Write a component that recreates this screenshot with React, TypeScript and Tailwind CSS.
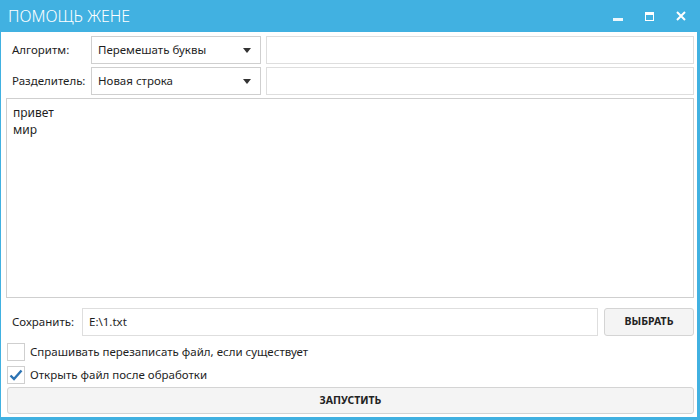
import React, { useState } from 'react';

const font = { fontFamily: '"Noto Sans", "Open Sans", sans-serif' };

const Combo: React.FC<{ value: string }> = ({ value }) => (
  <div className="flex items-center justify-between w-[170px] h-[28px] border border-[#cfcfcf] bg-white pl-[6px] pr-[9px] text-[#1e1e1e]">
    <span>{value}</span>
    <svg width="8" height="5" viewBox="0 0 8 5">
      <path d="M0 0 L8 0 L4 5 Z" fill="#333" />
    </svg>
  </div>
);

const Check: React.FC<{ checked: boolean; label: string; onToggle: () => void }> = ({ checked, label, onToggle }) => (
  <div className="flex items-center h-[23px] cursor-default" onClick={onToggle}>
    <div className="ml-[1px] w-[18px] h-[18px] border border-[#cfcfcf] bg-white flex items-center justify-center">
      {checked && (
        <svg width="14" height="12" viewBox="0 0 14 12">
          <path d="M1.5 6.5 L5 10 L12.5 1.5" stroke="#2c73b3" strokeWidth="2.4" fill="none" />
        </svg>
      )}
    </div>
    <span className="ml-[5px]">{label}</span>
  </div>
);

export default function App() {
  const [ask, setAsk] = useState(false);
  const [open, setOpen] = useState(true);

  return (
    <div style={font} className="w-[700px] h-[420px] bg-[#41b1e1] flex flex-col overflow-hidden">
      {/* Заголовок окна */}
      <div className="h-[32px] flex items-center justify-between pl-[8px] pr-[14px]">
        <span className="text-white text-[16px] font-light">ПОМОЩЬ ЖЕНЕ</span>
        <div className="flex items-center gap-[22px]">
          <div className="w-[10px] h-[10px] flex items-end">
            <div className="w-[10px] h-[3px] bg-white/90" />
          </div>
          <div className="w-[9px] h-[9px] border border-white border-t-[3px]" />
          <svg width="10" height="10" viewBox="0 0 10 10">
            <path d="M1 1 L9 9 M9 1 L1 9" stroke="white" strokeWidth="2" />
          </svg>
        </div>
      </div>

      {/* Содержимое */}
      <div className="flex-1 ml-[1px] mr-[3px] mb-[3px] bg-white pl-[5px] pr-[3px] pt-[4px] flex flex-col text-[11.5px] text-[#1e1e1e]">
        <div className="flex h-[28px] items-center">
          <span className="w-[85px] pl-[6px]">Алгоритм:</span>
          <Combo value="Перемешать буквы" />
          <div className="ml-[5px] flex-1 h-[28px] border border-[#dedede]" />
        </div>
        <div className="flex h-[28px] items-center mt-[3px]">
          <span className="w-[85px] pl-[6px]">Разделитель:</span>
          <Combo value="Новая строка" />
          <div className="ml-[5px] flex-1 h-[28px] border border-[#dedede]" />
        </div>

        <div className="mt-[3px] h-[200px] border border-[#cfcfcf] px-[6px] pt-[5px] leading-[17px] text-[12px]">
          <div>привет</div>
          <div>мир</div>
        </div>

        <div className="flex h-[28px] items-center mt-[10px]">
          <span className="w-[76px] pl-[6px]">Сохранить:</span>
          <div className="flex-1 h-[28px] border border-[#dedede] flex items-center pl-[6px]">E:\1.txt</div>
          <button className="ml-[6px] w-[90px] h-[28px] rounded-[3px] border border-[#d4d4d4] bg-[#f4f4f4] text-[10.5px] font-bold text-[#222]">
            ВЫБРАТЬ
          </button>
        </div>

        <div className="mt-[4px]">
          <Check checked={ask} onToggle={() => setAsk(!ask)} label="Спрашивать перезаписать файл, если существует" />
          <Check checked={open} onToggle={() => setOpen(!open)} label="Открыть файл после обработки" />
        </div>

        <button className="mt-[1px] ml-[1px] h-[27px] rounded-[3px] border border-[#d4d4d4] bg-[#f4f4f4] text-[10.5px] font-bold text-[#222]">
          ЗАПУСТИТЬ
        </button>
      </div>
    </div>
  );
}
